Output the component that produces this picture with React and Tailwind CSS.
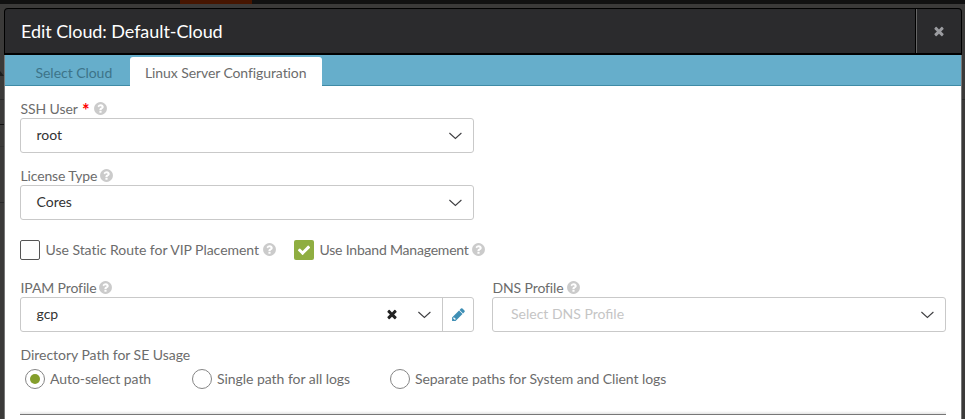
import React from "react";

const PATHS = {
  times:
    "M1490 1322q0 40-28 68l-136 136q-28 28-68 28t-68-28l-294-294-294 294q-28 28-68 28t-68-28l-136-136q-28-28-28-68t28-68l294-294-294-294q-28-28-28-68t28-68l136-136q28-28 68-28t68 28l294 294 294-294q28-28 68-28t68 28l136 136q28 28 28 68t-28 68l-294 294 294 294q28 28 28 68z",
  check:
    "M1671 566q0 40-28 68l-724 724-136 136q-28 28-68 28t-68-28l-136-136-362-362q-28-28-28-68t28-68l136-136q28-28 68-28t68 28l294 295 656-657q28-28 68-28t68 28l136 136q28 28 28 68z",
  help:
    "M1024 1376v-192q0-14-9-23t-23-9h-192q-14 0-23 9t-9 23v192q0 14 9 23t23 9h192q14 0 23-9t9-23zm256-672q0-88-55.5-163t-138.5-116-170-41q-243 0-371 213-15 24 8 42l132 100q7 6 19 6 16 0 25-12 53-68 86-92 34-24 86-24 48 0 85.5 26t37.5 59q0 38-20 61t-68 45q-63 28-115.5 86.5t-52.5 125.5v36q0 14 9 23t23 9h192q14 0 23-9t9-23q0-19 21.5-49.5t54.5-49.5q32-18 49-28.5t46-35 44.5-48 28-60.5 12.5-81zm384 192q0 209-103 385.5t-279.5 279.5-385.5 103-385.5-103-279.5-279.5-103-385.5 103-385.5 279.5-279.5 385.5-103 385.5 103 279.5 279.5 103 385.5z",
  pencil:
    "M491 1536l91-91-235-235-91 91v107h128v128h107zM960 416l416 416-832 832h-416v-416zm683 96q0 53-37 90l-166 166-416-416 166-165q36-38 90-38 53 0 91 38l235 234q37 39 37 91z",
};

function Icon({ name, className }) {
  return (
    <svg viewBox="0 0 1792 1792" fill="currentColor" className={"shrink-0 " + className}>
      <path d={PATHS[name]} />
    </svg>
  );
}

function Help() {
  return <Icon name="help" className="size-[15px] text-[#cbcbcb]" />;
}

function Chevron({ className = "" }) {
  return (
    <svg viewBox="0 0 14 8" fill="none" stroke="#3f3f42" strokeWidth="1.1" className={"h-2 w-3.5 shrink-0 " + className}>
      <path d="M1.4 1l6 5.5L13.4 1" />
    </svg>
  );
}

function Label({ children, width, tracking = "", required }) {
  return (
    <div className="flex h-[17px] items-start">
      <span className={"h-[17px] leading-[15px] " + width + " " + tracking}>{children}</span>
      {required && (
        <span className="mr-[3px] w-2 text-[18px] leading-[18px] font-bold text-[#f00]">*</span>
      )}
      <Help />
    </div>
  );
}

function Radio({ checked, children, className }) {
  return (
    <label className={"flex h-5 items-center gap-[5px] " + className}>
      <span className="flex size-5 shrink-0 items-center justify-center rounded-full border border-[#858585]">
        {checked && <span className="size-2.5 rounded-full bg-[#849e2b]" />}
      </span>
      <span className="pb-0.5">{children}</span>
    </label>
  );
}

export default function App() {
  return (
    <div className="flex h-[419px] w-[965px] flex-col overflow-hidden bg-[#3b3a39] font-['Lato','Open_Sans',sans-serif] text-[14px] whitespace-nowrap text-[#6c6c6c]">
      <div className="flex h-1 shrink-0 bg-[#111]">
        <div className="ml-[180px] h-1 w-[72px] bg-[#471500]" />
      </div>
      <div className="flex flex-1">
        <div className="flex w-1 shrink-0 flex-col bg-[#3b3a39]">
          <svg viewBox="0 0 4 5" className="mt-[67px] h-[5px] w-1">
            <path d="M0 0l4 5H0z" fill="#1d1d1d" />
          </svg>
          <div className="mt-[23px] h-px bg-[#2b2b2b]" />
          <div className="mt-6 h-px bg-[#111]" />
          <div className="mt-[21px] h-px bg-[#333]" />
          <div className="mt-[55px] h-px bg-[#292929]" />
        </div>
        <div className="mt-1 flex flex-1 flex-col">
          <header className="flex h-[47px] shrink-0 items-stretch rounded-t border border-b-2 border-black bg-[#2b2b2d]">
            <h1 className="flex-1 pl-4 text-[18px] leading-[45px] tracking-[-0.07px] text-white">Edit Cloud: Default-Cloud</h1>
            <div className="flex w-[46px] items-center justify-center border-l border-black">
              <div className="flex h-full flex-1 items-center justify-center border-l border-[#666]">
                <Icon name="times" className="size-[14px] text-[#9b9ca0]" />
              </div>
            </div>
          </header>
          <div className="flex flex-1 flex-col border-x border-[#777] bg-white">
            <nav className="flex h-[31px] shrink-0 bg-[#66aecb]">
              <div className="w-[125px] border-b border-[#3f8ba6] pl-[30.5px] leading-[36px] tracking-[-0.04px] text-[#3d7489]">Select Cloud</div>
              <div className="mt-0.5 w-[192px] rounded-t-[3px] bg-white pl-[15px] leading-[32px] tracking-[-0.09px]">Linux Server Configuration</div>
              <div className="flex-1 border-b border-[#3f8ba6]" />
            </nav>
            <main className="flex w-[941px] flex-1 flex-col pt-[15px] pl-[15px]">
              <Label width="w-[62px]" tracking="pl-[0.5px] tracking-[-0.1px]" required>SSH User</Label>
              <div className="flex h-[35px] w-[454px] items-center justify-between rounded-[3px] border border-[#c9c9c9] pr-[11px] pl-[15.5px] text-[#333]">
                <span className="pb-0.5">root</span>
                <Chevron />
              </div>

              <div className="h-[15px]" />
              <Label width="w-[79px]" tracking="pl-[0.5px] tracking-[-0.15px]">License Type</Label>
              <div className="flex h-[35px] w-[454px] items-center justify-between rounded-[3px] border border-[#c9c9c9] pr-[11px] pl-[15.5px] text-[#333]">
                <span className="pb-0.5">Cores</span>
                <Chevron />
              </div>

              <div className="mt-5 flex h-5 items-center">
                <span className="size-5 rounded-[2px] border border-[#555]" />
                <span className="ml-[5px] w-[217px] pb-0.5 pl-[0.5px] tracking-[-0.03px]">Use Static Route for VIP Placement</span>
                <span className="-mt-0.5"><Help /></span>
                <span className="ml-[17px] flex size-5 items-center justify-center rounded-[2px] bg-[#8fae41]">
                  <Icon name="check" className="size-[14px] text-white" />
                </span>
                <span className="ml-[5px] w-[152px] pb-0.5 pl-[0.5px] tracking-[-0.2px]">Use Inband Management</span>
                <span className="-mt-0.5"><Help /></span>
              </div>

              <div className="mt-5 grid grid-cols-[454px_454px] gap-[18px]">
                <div>
                  <Label width="w-[78px]" tracking="pl-[0.5px] tracking-[-0.12px]">IPAM Profile</Label>
                  <div className="flex h-[35px] items-center rounded-[3px] border border-[#c9c9c9] pl-[15.5px] text-[#333]">
                    <span className="flex-1 pb-0.5">gcp</span>
                    <Icon name="times" className="mb-px size-[14px] text-[#222]" />
                    <Chevron className="mr-[11px] ml-[18px]" />
                    <span className="flex h-full w-[31px] items-center justify-center border-l border-[#c9c9c9]">
                      <Icon name="pencil" className="size-[15px] text-[#3f8fb5]" />
                    </span>
                  </div>
                </div>
                <div>
                  <Label width="w-[74px]" tracking="pl-[0.5px] tracking-[-0.12px]">DNS Profile</Label>
                  <div className="flex h-[35px] items-center justify-between rounded-[3px] border border-[#c9c9c9] pr-[11px] pl-[18px] text-[#c5c5c5]">
                    <span className="pb-0.5">Select DNS Profile</span>
                    <Chevron />
                  </div>
                </div>
              </div>

              <div className="mt-[15px] h-[17px] pl-[0.5px] leading-[15px] tracking-[-0.03px]">Directory Path for SE Usage</div>
              <div className="mt-[5px] flex pl-[5px]">
                <Radio checked className="w-[167px] tracking-[-0.07px]">Auto-select path</Radio>
                <Radio className="w-[198px] tracking-[-0.04px]">Single path for all logs</Radio>
                <Radio className="tracking-[-0.07px]">Separate paths for System and Client logs</Radio>
              </div>
              <div className="mt-[22px] h-[3px] shrink-0 bg-linear-to-b from-white to-[#e4e4e4]" />
              <div className="h-px shrink-0 bg-[#777]" />
            </main>
          </div>
        </div>
        <div className="w-[3px] shrink-0 pt-[95px]">
          <div className="h-px bg-[#2b2b2b]" />
        </div>
      </div>
    </div>
  );
}
